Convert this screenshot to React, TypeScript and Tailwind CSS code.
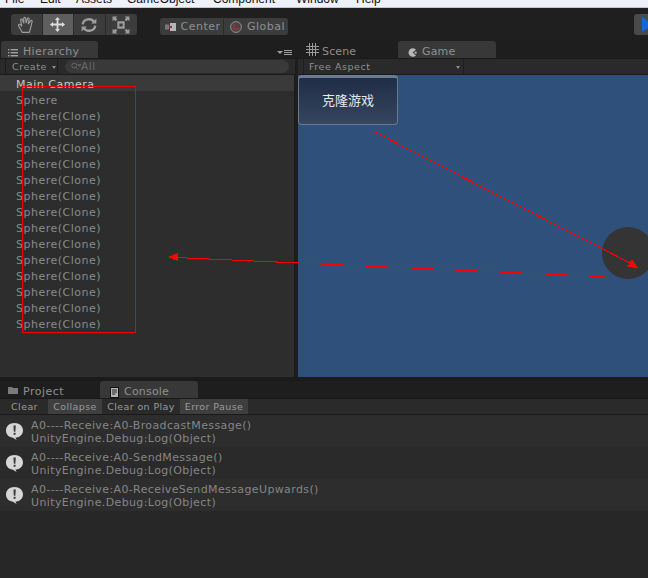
import { ReactNode } from "react";

const font = "font-['DejaVu_Sans',sans-serif]";

const clones = Array.from({ length: 14 }, () => "Sphere(Clone)");

const logs = [
  { text: "A0----Receive:A0-BroadcastMessage()", bg: "bg-[#2d2d2d]" },
  { text: "A0----Receive:A0-SendMessage()", bg: "bg-[#2a2a2a]" },
  { text: "A0----Receive:A0-ReceiveSendMessageUpwards()", bg: "bg-[#2d2d2d]" },
];

const HandIcon = () => (
  <svg width="18" height="18" viewBox="0 0 17 17" fill="none" stroke="#9c9c9c" strokeWidth="1.1">
    <path d="M5 15.5 L1.6 9.4 C1 7.8 2.6 7.2 3.6 8.6 L4.6 9.8 L3.4 4 C3.3 2.8 4.9 2.5 5.3 3.8 L6.4 7 L6.4 2.2 C6.5 0.9 8.1 0.9 8.2 2.2 L8.6 6.8 L9.9 2.6 C10.3 1.4 11.7 1.8 11.4 3.2 L10.6 7.6 L12.8 4.6 C13.6 3.8 14.7 4.4 14.2 5.6 L12.9 11 C12.5 13 11.9 14.4 11.5 15.5 Z" />
  </svg>
);

const MoveIcon = () => (
  <svg width="15" height="15" viewBox="0 0 15 15" fill="#dedede">
    <path d="M7.5 0 L10 3 L8.4 3 L8.4 6.6 L12 6.6 L12 5 L15 7.5 L12 10 L12 8.4 L8.4 8.4 L8.4 12 L10 12 L7.5 15 L5 12 L6.6 12 L6.6 8.4 L3 8.4 L3 10 L0 7.5 L3 5 L3 6.6 L6.6 6.6 L6.6 3 L5 3 Z" />
  </svg>
);

const RotateIcon = () => (
  <svg width="16" height="16" viewBox="0 0 15 15" fill="none" stroke="#9e9e9e" strokeWidth="2.2">
    <path d="M1.6 7 C2.2 1.4 10 0.8 12 4.5" />
    <path d="M13.4 8 C12.8 13.6 5 14.2 3 10.5" />
    <path d="M14.4 1.4 L14.4 6.2 L9.6 6.2 Z" fill="#9e9e9e" stroke="none" />
    <path d="M0.6 13.6 L0.6 8.8 L5.4 8.8 Z" fill="#9e9e9e" stroke="none" />
  </svg>
);

const ScaleIcon = () => (
  <svg width="18" height="18" viewBox="0 0 17 17" fill="#9c9c9c">
    <path d="M5 5 H12 V12 H5 Z M7 7 V10 H10 V7 Z" fillRule="evenodd" />
    <path d="M0.5 0.5 H5 L3.6 2 L5 3.4 L3.4 5 L2 3.6 L0.5 5 Z" />
    <path d="M16.5 0.5 H12 L13.4 2 L12 3.4 L13.6 5 L15 3.6 L16.5 5 Z" />
    <path d="M0.5 16.5 H5 L3.6 15 L5 13.6 L3.4 12 L2 13.4 L0.5 12 Z" />
    <path d="M16.5 16.5 H12 L13.4 15 L12 13.6 L13.6 12 L15 13.4 L16.5 12 Z" />
  </svg>
);

const CenterIcon = () => (
  <svg width="11" height="8" viewBox="0 0 11 8">
    <rect x="0" y="1.5" width="4" height="5" fill="#777" />
    <rect x="5" y="0" width="6" height="8" fill="#b5b5b5" />
    <rect x="4" y="3" width="3" height="2" fill="#a02c3c" />
  </svg>
);

const GlobalIcon = () => (
  <svg width="12" height="12" viewBox="0 0 12 12">
    <circle cx="6" cy="6" r="5.4" fill="#4a4444" stroke="#8f8f8f" />
    <path d="M4 2.5 V8 H9" fill="none" stroke="#b02c3c" strokeWidth="1.4" />
  </svg>
);

const ListIcon = () => (
  <svg width="10" height="8" viewBox="0 0 10 8" fill="#a0a0a0">
    <rect x="0" y="0" width="1.4" height="1.4" />
    <rect x="0" y="3" width="1.4" height="1.4" />
    <rect x="0" y="6" width="1.4" height="1.4" />
    <rect x="2.6" y="0" width="7.4" height="1.4" />
    <rect x="2.6" y="3" width="7.4" height="1.4" />
    <rect x="2.6" y="6" width="7.4" height="1.4" />
  </svg>
);

const GridIcon = () => (
  <svg width="13" height="13" viewBox="0 0 13 13" stroke="#9a9a9a" strokeWidth="1" shapeRendering="crispEdges">
    <path d="M3.5 0 V13 M6.5 0 V13 M9.5 0 V13 M0 3.5 H13 M0 6.5 H13 M0 9.5 H13" />
  </svg>
);

const PacmanIcon = () => (
  <svg width="9" height="9" viewBox="0 0 9 9">
    <path d="M8 1.6 A4.3 4.3 0 1 0 8 7.4 L4.6 4.5 Z" fill="#b8b8b8" />
    <rect x="6.6" y="3.6" width="2" height="2" fill="#b8b8b8" />
  </svg>
);

const FolderIcon = () => (
  <svg width="10" height="8" viewBox="0 0 10 8">
    <path d="M0 1 H4 L5 2 H10 V8 H0 Z" fill="#7a7a7a" />
  </svg>
);

const ConsoleIcon = () => (
  <svg width="9" height="11" viewBox="0 0 9 11">
    <rect x="0" y="0" width="9" height="11" fill="#111" />
    <rect x="1" y="1" width="7" height="9" fill="#b5b5b5" />
    <path d="M2 3 H7 M2 5 H7 M2 7 H5.5" stroke="#222" strokeWidth="1" />
  </svg>
);

const InfoBubble = () => (
  <svg width="19" height="19" viewBox="0 0 19 19">
    <path d="M9.5 1 C14.5 1 18 4.2 18 8.4 C18 12.4 14.6 15.4 10.4 15.6 L11.6 18 L7.4 15.6 C3.6 15 1 12.2 1 8.4 C1 4.2 4.5 1 9.5 1 Z" fill="#d6d6d6" />
    <path d="M8.4 3.6 H10.8 L10.4 9.8 H8.8 Z" fill="#3c3c3c" />
    <rect x="8.6" y="10.8" width="2" height="2" fill="#3c3c3c" />
  </svg>
);

const ToolButton = ({ children, active, last }: { children: ReactNode; active?: boolean; last?: boolean }) => (
  <div
    className={`flex h-full w-[31.5px] items-center justify-center ${last ? "" : "border-r border-[#2b2b2b]"} ${
      active ? "bg-[#5e5e5e]" : ""
    }`}
  >
    {children}
  </div>
);

const Filter = ({ label, on, width, pad }: { label: string; on?: boolean; width: number; pad?: boolean }) => (
  <div
    style={{ width }}
    className={`flex h-full shrink-0 items-center justify-center pt-[2px] text-[9.5px] tracking-[0.4px] text-[#9a9a9a] ${
      on ? "bg-[#3f3f3f]" : ""
    } ${pad ? "pr-[4px]" : ""}`}
  >
    {label}
  </div>
);

// red markup someone drew on top of the screenshot
const Annotations = () => (
  <svg
    className="pointer-events-none absolute left-0 top-0"
    width="648"
    height="578"
    viewBox="0 0 648 578"
    fill="none"
    shapeRendering="crispEdges"
  >
    <rect x="22.5" y="86.5" width="113" height="246" stroke="#f00000" strokeWidth="1" />
    <path d="M605 276.7 L178 257.6" stroke="#ff0000" strokeWidth="1" />
    <path d="M168 257 L178 253 L178 261 Z" fill="#ff0000" />
    <path d="M375 132 L632 264" stroke="#ff0000" strokeWidth="1" />
    <path d="M638 268 L627 267 L632 259 Z" fill="#ff0000" />
  </svg>
);

export default function App() {
  return (
    <div className={`relative flex h-[578px] w-[648px] flex-col overflow-hidden bg-[#1e1e1e] ${font}`}>
      {/* menu bar, cut off by the top of the shot */}
      <div className="relative h-[8px] shrink-0 overflow-hidden border-b border-[#c4c6d6] bg-[#eef0fa] font-['Liberation_Sans',sans-serif] text-[12px] leading-[14px] text-[#111]">
        <div className="-mt-[8px] flex">
          <span className="ml-[5px] w-[35px]">File</span>
          <span className="w-[36px]">Edit</span>
          <span className="w-[51px]">Assets</span>
          <span className="w-[86px]">GameObject</span>
          <span className="w-[83px]">Component</span>
          <span className="w-[60px]">Window</span>
          <span>Help</span>
        </div>
      </div>

      {/* toolbar */}
      <div className="flex h-[33px] shrink-0 items-start bg-[#1f1f1f] pl-[11px] pt-[6px]">
        <div className="flex h-[21px] w-[126px] overflow-hidden rounded-[3px] bg-[#3c3c3c]">
          <ToolButton>
            <HandIcon />
          </ToolButton>
          <ToolButton active>
            <MoveIcon />
          </ToolButton>
          <ToolButton>
            <RotateIcon />
          </ToolButton>
          <ToolButton last>
            <ScaleIcon />
          </ToolButton>
        </div>
        <div className="ml-[23px] mt-[4px] flex h-[17px] w-[128px] rounded-[3px] bg-[#3c3c3c] pt-px text-[11px] tracking-[0.5px] text-[#8f8f8f]">
          <div className="flex w-[64px] items-center justify-center gap-[4px] border-r border-[#2b2b2b] pl-[3px]">
            <CenterIcon />
            Center
          </div>
          <div className="flex flex-1 items-center justify-center gap-[5px] pl-[3px]">
            <GlobalIcon />
            Global
          </div>
        </div>
        <div className="ml-auto h-[21px] w-[14px] overflow-hidden rounded-l-[3px] bg-[#4a4a4a] pl-[8px] pt-[3px]">
          <svg width="6" height="15" viewBox="0 0 6 15">
            <path d="M0 0 L6 4 V11 L0 15 Z" fill="#1668d8" />
          </svg>
        </div>
      </div>

      {/* hierarchy + game */}
      <div className="flex h-[336px] shrink-0">
        <div className="flex w-[295px] shrink-0 flex-col">
          <div className="flex h-[17px] shrink-0 items-end justify-between pr-[3px]">
            <div className="ml-[1px] flex h-[17px] w-[97px] items-center gap-[5px] rounded-t-[3px] bg-[#383838] pl-[7px] pt-[6px] text-[11px] tracking-[0.35px] text-[#8f8f8f]">
              <ListIcon />
              Hierarchy
            </div>
            <div className="mb-[3px] flex items-center gap-[1px]">
              <div className="h-0 w-0 border-x-[3px] border-t-[3px] border-x-transparent border-t-[#a0a0a0]" />
              <div className="flex flex-col gap-[1px]">
                <div className="h-px w-[8px] bg-[#a0a0a0]" />
                <div className="h-px w-[8px] bg-[#a0a0a0]" />
                <div className="h-px w-[8px] bg-[#a0a0a0]" />
              </div>
            </div>
          </div>
          <div className="flex h-[17px] shrink-0 items-center border-y border-[#1a1a1a] bg-[#2a2a2a] pl-[5px] pr-[6px] text-[9.5px] tracking-[0.55px] text-[#8f8f8f]">
            <div className="flex h-full w-[53px] items-center gap-[5px] border-x border-[#1e1e1e] pl-[6px] pt-[2px]">
              Create
              <div className="h-0 w-0 border-x-[2.5px] border-t-[3px] border-x-transparent border-t-[#8a8a8a]" />
            </div>
            <div className="ml-[7px] flex h-[13px] flex-1 items-center rounded-full bg-[#393939] pl-[6px] text-[10.5px] text-[#6a6a6a]">
              <svg width="10" height="9" viewBox="0 0 11 9" fill="none" stroke="#6a6a6a">
                <circle cx="3.5" cy="3.5" r="2.6" />
                <path d="M5.5 5.5 L8 8 M7.5 2.5 H11 L9.2 4.4 Z" />
              </svg>
              All
            </div>
          </div>
          <div className="flex-1 border-r border-[#1a1a1a] bg-[#2d2d2d] text-[11px] leading-[20px] tracking-[0.5px] text-[#8a8a8a]">
            <div className="h-[16px] bg-[#3a3a3a] pl-[16px] text-[#c8c8c8]">Main Camera</div>
            <div className="h-[16px] pl-[16px]">Sphere</div>
            {clones.map((name, i) => (
              <div key={i} className="h-[16px] pl-[16px]">
                {name}
              </div>
            ))}
          </div>
        </div>

        <div className="flex flex-1 flex-col pl-[3px]">
          <div className="flex h-[17px] shrink-0 items-center text-[11px] tracking-[0.15px] text-[#8f8f8f]">
            <div className="flex w-[100px] items-center gap-[3px] pl-[8px]">
              <GridIcon />
              <span className="pt-[6px]">Scene</span>
            </div>
            <div className="flex h-[17px] w-[98px] items-center gap-[5px] rounded-t-[3px] bg-[#383838] pl-[10px] pt-[6px]">
              <PacmanIcon />
              Game
            </div>
          </div>
          <div className="flex h-[17px] shrink-0 border-y border-[#1a1a1a] bg-[#2a2a2a] pl-[5px] text-[9.5px] tracking-[0.55px] text-[#8f8f8f]">
            <div className="flex w-[161px] items-center justify-between border-x border-[#1e1e1e] pl-[5px] pr-[3px] pt-[2px]">
              Free Aspect
              <div className="h-0 w-0 border-x-[2.5px] border-t-[3px] border-x-transparent border-t-[#8a8a8a]" />
            </div>
          </div>
          <div className="relative flex-1 overflow-hidden bg-[#30507c]">
            <div className="flex h-[50px] w-[100px] items-center justify-center rounded-[4px] border border-[#6a7a90] border-t-[3px] bg-gradient-to-b from-[#202d47] to-[#36465f] pb-[2px] font-['Noto_Sans_CJK_SC',sans-serif] text-[13px] text-[#e8e8e8]">
              克隆游戏
            </div>
            <div className="absolute left-[304px] top-[152px] h-[52px] w-[52px] rounded-full bg-[#343434]" />
          </div>
        </div>
      </div>

      {/* project / console */}
      <div className="flex min-h-0 flex-1 flex-col">
        <div className="flex h-[4px] shrink-0 bg-[#1b1b1b]" />
        <div className="flex h-[17px] shrink-0 items-center text-[11px] tracking-[0.5px] text-[#8f8f8f]">
          <div className="flex w-[100px] items-center gap-[5px] pl-[8px]">
            <FolderIcon />
            <span className="pt-[6px]">Project</span>
          </div>
          <div className="flex h-[17px] w-[98px] items-center gap-[5px] rounded-t-[3px] bg-[#383838] pl-[10px] pt-[6px] tracking-[0.2px]">
            <ConsoleIcon />
            Console
          </div>
        </div>
        <div className="flex h-[17px] shrink-0 border-y border-[#1a1a1a] bg-[#2a2a2a] pl-[5px]">
          <Filter label="Clear" width={43} pad />
          <Filter label="Collapse" on width={54} />
          <Filter label="Clear on Play" width={78} />
          <Filter label="Error Pause" on width={68} />
        </div>
        <div className="flex-1 bg-[#272727]">
          {logs.map((log) => (
            <div key={log.text} className={`flex h-[32px] items-center gap-[7px] pl-[5px] ${log.bg}`}>
              <InfoBubble />
              <div className="pt-[2px] text-[11px] leading-[13px] tracking-[0.38px] text-[#858585]">
                <div>{log.text}</div>
                <div>UnityEngine.Debug:Log(Object)</div>
              </div>
            </div>
          ))}
        </div>
      </div>

      <Annotations />
    </div>
  );
}
